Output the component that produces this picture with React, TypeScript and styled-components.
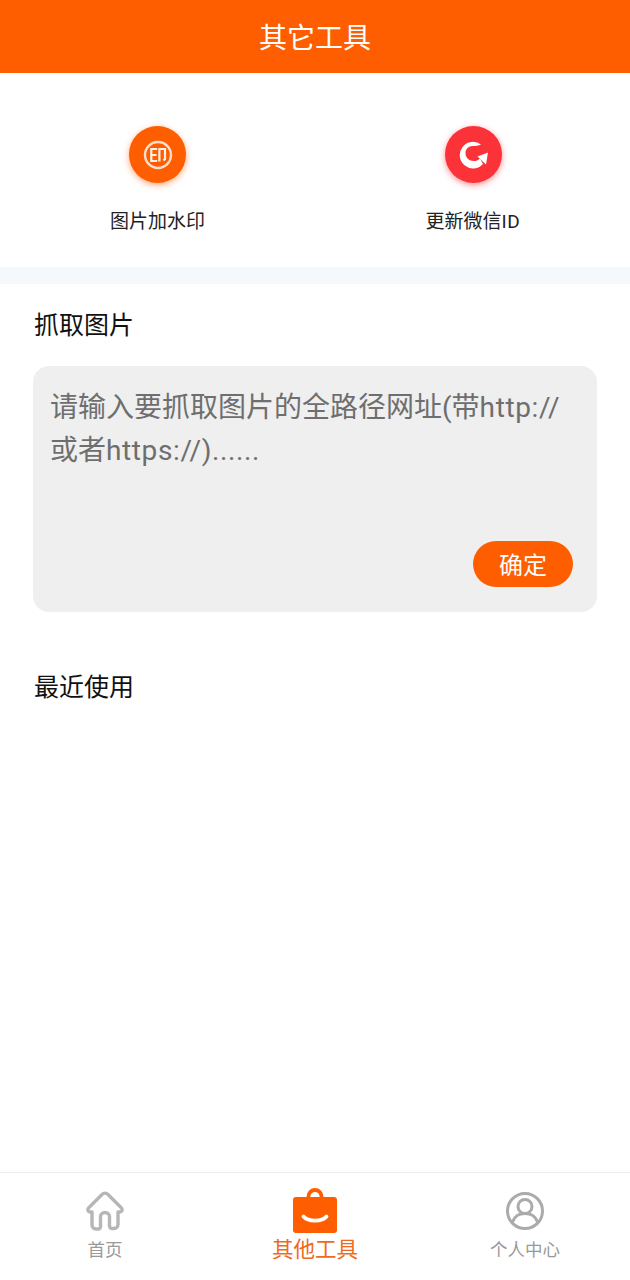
import React from "react";
import styled, { createGlobalStyle } from "styled-components";

const Global = createGlobalStyle`
  html, body { margin: 0; padding: 0; background: #fff; }
  body { font-family: Roboto, "Noto Sans CJK SC", sans-serif; }
  * { box-sizing: border-box; }
`;

const Page = styled.div`
  width: 630px;
  height: 1280px;
  display: flex;
  flex-direction: column;
  background: #fff;
  overflow: hidden;
`;

const Header = styled.header`
  height: 73px;
  flex: none;
  display: flex;
  align-items: center;
  justify-content: center;
  background: #ff5e00;
  color: #fff;
  font-size: 28px;
  padding-bottom: 2px;
`;

const ToolRow = styled.section`
  height: 194px;
  flex: none;
  display: grid;
  grid-template-columns: 315px 316px;
  padding-top: 53px;
`;

const Tool = styled.div`
  display: flex;
  flex-direction: column;
  align-items: center;
`;

const ToolIcon = styled.div<{ $color: string }>`
  width: 57px;
  height: 57px;
  border-radius: 50%;
  background: ${(p) => p.$color};
  box-shadow: 0 2px 6px ${(p) => p.$color}88;
  display: flex;
  align-items: center;
  justify-content: center;
`;

const ToolLabel = styled.div`
  margin-top: 25px;
  font-size: 19px;
  line-height: 28px;
  color: #222;
`;

const LatinRun = styled.span`
  letter-spacing: 0.62px;
`;

const Divider = styled.div`
  height: 17px;
  flex: none;
  background: #f5f9fb;
`;

const Section = styled.section`
  padding: 0 33px;
  flex: none;
`;

const SectionTitle = styled.h2<{ $top: number }>`
  margin: ${(p) => p.$top}px 0 0;
  padding-left: 1px;
  font-size: 25px;
  line-height: 34px;
  font-weight: 400;
  color: #111;
`;

const InputCard = styled.div`
  position: relative;
  margin-top: 23px;
  height: 246px;
  border-radius: 16px;
  background: #efefef;
  padding: 20px 17px;
  font-size: 28px;
  line-height: 43px;
  color: #6e6e6e;
`;

const Confirm = styled.button`
  position: absolute;
  right: 24px;
  bottom: 25px;
  width: 100px;
  height: 46px;
  border: 0;
  border-radius: 23px;
  background: #ff5e00;
  color: #fff;
  font: inherit;
  font-size: 24px;
  line-height: 46px;
  padding: 2px 0 0;
`;

const Spacer = styled.div`
  flex: 1;
`;

const TabBar = styled.nav`
  height: 108px;
  flex: none;
  border-top: 1px solid #ececec;
  display: grid;
  grid-template-columns: 210px 210px 210px;
`;

const Tab = styled.div`
  display: flex;
  flex-direction: column;
  align-items: center;
  padding-top: 15px;
`;

const TabIcon = styled.div`
  height: 46px;
  display: flex;
  align-items: center;
  justify-content: center;
`;

const TabLabel = styled.div<{ $active?: boolean }>`
  margin-top: 2px;
  font-size: ${(p) => (p.$active ? "21.5px" : "17.5px")};
  line-height: 28px;
  color: ${(p) => (p.$active ? "#ee6a1c" : "#999")};
`;

const WatermarkGlyph = () => (
  <svg width="30" height="30" viewBox="0 0 30 30" fill="none" stroke="#fff">
    <circle cx="15" cy="15" r="13" strokeWidth="2.4" opacity="0.8" />
    <path
      d="M14.200 9H8.300v12h5.900M8.300 15h5.200M16.400 21.500V9h5.600v10l-1.500 1.500"
      strokeWidth="2.200"
      opacity="0.92"
    />
  </svg>
);

const RefreshGlyph = () => (
  <svg width="32" height="32" viewBox="0 0 32 32" fill="#fff">
    <path d="M24 5.500A13.300 13.300 0 1 0 26 25L23 19.500C21 21.500 19 22 17 22C12 22 8.500 18.500 8.500 14C8.500 10 11.500 7 15.500 7C18.500 7 21.500 6.500 24 5.500Z" />
    <path d="M20.500 17.500L31 13.500L29 25.500Z" />
  </svg>
);

const HomeGlyph = () => (
  <svg width="40" height="40" viewBox="0 0 40 40" fill="none" stroke="#b6b6b6" strokeWidth="3.400" strokeLinejoin="round" strokeLinecap="round">
    <path d="M17 3.500a4 4 0 0 1 6 0l13.500 13.500c1.500 1.700.5 4-1.700 4H33v12.500a4 4 0 0 1-4 4h-2a2.500 2.500 0 0 1-2.500-2.500V26a4.500 4.500 0 0 0-9 0v10a2.500 2.500 0 0 1-2.500 2H11a4 4 0 0 1-4-4V21H5.200c-2.200 0-3.200-2.300-1.700-4z" />
  </svg>
);

const BagGlyph = () => (
  <svg width="46" height="46" viewBox="0 0 46 46">
    <path d="M16.500 11V8.500a6.500 6.500 0 0 1 13 0V11" fill="none" stroke="#ff5e00" strokeWidth="3.800" />
    <rect x="1" y="9" width="44" height="36" rx="3" fill="#ff5e00" />
    <path d="M11.500 28.500C16 34 30 34 34.500 28.500" fill="none" stroke="#fff" strokeWidth="3.800" strokeLinecap="round" />
  </svg>
);

const UserGlyph = () => (
  <svg width="40" height="40" viewBox="0 0 40 40" fill="none" stroke="#ababab" strokeWidth="3">
    <circle cx="20" cy="20" r="17.500" />
    <circle cx="20" cy="15.500" r="7" />
    <path d="M7.500 31c2-6 7-8.500 12.500-8.500S30.500 25 32.500 31" />
  </svg>
);

export default function App() {
  return (
    <>
      <Global />
      <Page>
        <Header>其它工具</Header>
        <ToolRow>
          <Tool>
            <ToolIcon $color="#ff5e00">
              <WatermarkGlyph />
            </ToolIcon>
            <ToolLabel>图片加水印</ToolLabel>
          </Tool>
          <Tool>
            <ToolIcon $color="#fb3338">
              <RefreshGlyph />
            </ToolIcon>
            <ToolLabel>
              更新微信<LatinRun>ID</LatinRun>
            </ToolLabel>
          </Tool>
        </ToolRow>
        <Divider />
        <Section>
          <SectionTitle $top={25}>抓取图片</SectionTitle>
          <InputCard>
            请输入要抓取图片的全路径网址(带<LatinRun>http://</LatinRun>
            <br />
            或者<LatinRun>https://)......</LatinRun>
            <Confirm>确定</Confirm>
          </InputCard>
          <SectionTitle $top={59}>最近使用</SectionTitle>
        </Section>
        <Spacer />
        <TabBar>
          <Tab>
            <TabIcon>
              <HomeGlyph />
            </TabIcon>
            <TabLabel>首页</TabLabel>
          </Tab>
          <Tab>
            <TabIcon>
              <BagGlyph />
            </TabIcon>
            <TabLabel $active>其他工具</TabLabel>
          </Tab>
          <Tab>
            <TabIcon>
              <UserGlyph />
            </TabIcon>
            <TabLabel>个人中心</TabLabel>
          </Tab>
        </TabBar>
      </Page>
    </>
  );
}
